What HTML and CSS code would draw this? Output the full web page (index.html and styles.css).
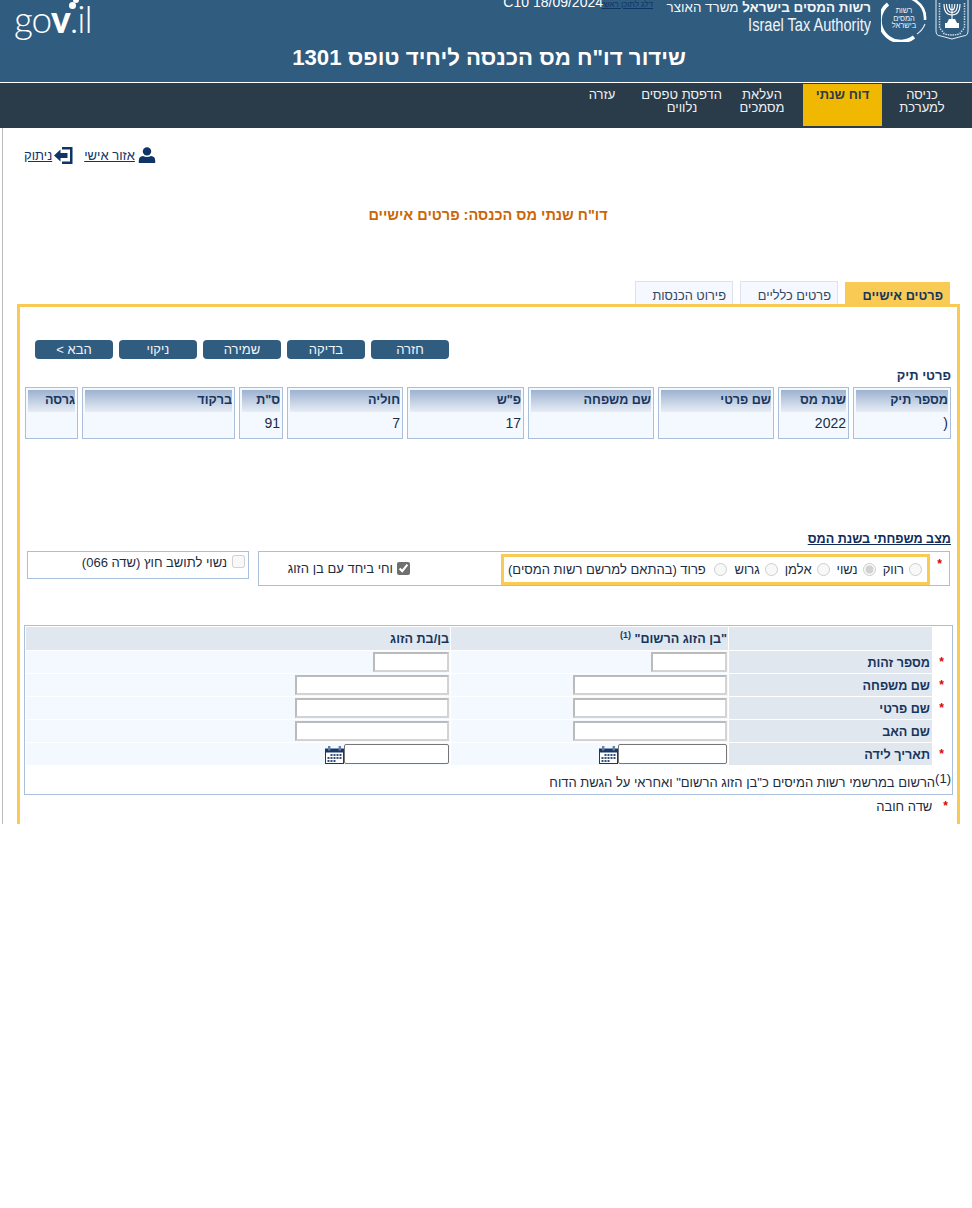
FILE: index.html
```html
<!DOCTYPE html>
<html lang="he" dir="rtl">
<head>
<meta charset="utf-8">
<title>שידור דו"ח מס הכנסה</title>
<link rel="stylesheet" href="styles.css">
</head>
<body>
<header class="site-header">
  <div class="brand-row">
    <svg class="emblem" viewBox="0 0 34 42" aria-hidden="true">
      <path d="M1 1 H33 V33 Q33 38 28 38 L17 41 L6 38 Q1 38 1 33 Z" fill="none" stroke="#e6edf3" stroke-width="1"/>
      <g fill="none" stroke="#fff" stroke-width="1.1">
        <path d="M17 6 V22"/>
        <path d="M9 6 Q9 17 17 17 Q25 17 25 6"/>
        <path d="M11.5 6 Q11.5 14.5 17 14.5 Q22.5 14.5 22.5 6"/>
        <path d="M14.2 6 Q14.2 12 17 12 Q19.8 12 19.8 6"/>
      </g>
      <path d="M14 21 H20 L22 25 H24 V30 H10 V25 H12 Z" fill="#fff"/>
      <g fill="none" stroke="#cfdbe5" stroke-width="1.6" stroke-dasharray="1.4 1.2">
        <path d="M4.5 5 V30 L9 35"/>
        <path d="M29.5 5 V30 L25 35"/>
      </g>
      <path d="M8 35.5 Q17 38.5 26 35.5" fill="none" stroke="#dbe5ed" stroke-width="1.3" stroke-dasharray="1.6 .8"/>
    </svg>
    <svg class="roundel" viewBox="0 0 46 46" aria-hidden="true">
      <path d="M7 8 A20.5 20.5 0 0 0 33 41" fill="none" stroke="#fff" stroke-width="3.6"/>
      <path d="M15 3 A21 21 0 0 1 44 24" fill="none" stroke="#fff" stroke-width="2.6"/>
      <path d="M36 38 A21 21 0 0 0 44 28" fill="none" stroke="#dfe7ee" stroke-width="1.2"/>
      <g class="roundel-text" text-anchor="middle">
        <text x="23" y="17">רשות</text>
        <text x="23" y="24.5">המסים</text>
        <text x="23" y="32">בישראל</text>
      </g>
    </svg>
    <div class="authority">
      <div class="authority-he"><strong>רשות המסים בישראל</strong> משרד האוצר</div>
      <div class="authority-en" dir="ltr">Israel Tax Authority</div>
    </div>
    <a class="skip-link" href="#main">דלג לתוכן ראשי</a>
    <div class="stamp" dir="ltr">C10 18/09/2024</div>
    <div class="gov-logo" dir="ltr">
      <span>go</span><b>v</b><span>.il</span>
      <i class="gov-dot gov-dot-a"></i><i class="gov-dot gov-dot-b"></i>
    </div>
  </div>
  <h1 class="page-title">שידור דו"ח מס הכנסה ליחיד טופס 1301</h1>
</header>

<nav class="main-nav">
  <a class="nav-item" href="#">כניסה<br>למערכת</a>
  <a class="nav-item is-active" href="#">דוח שנתי</a>
  <a class="nav-item" href="#">העלאת<br>מסמכים</a>
  <a class="nav-item" href="#">הדפסת טפסים<br>נלווים</a>
  <a class="nav-item" href="#">עזרה</a>
</nav>

<main class="page-frame" id="main">
  <div class="user-links">
    <svg class="icon-user" viewBox="0 0 18 16" aria-hidden="true">
      <circle cx="9" cy="4.4" r="4.2" fill="#0f3566"/>
      <path d="M0.8 16 V13.5 Q0.8 9.4 5 9 Q9 11.2 13 9 Q17.2 9.4 17.2 13.5 V16 Z" fill="#0f3566"/>
    </svg>
    <a href="#">אזור אישי</a>
    <svg class="icon-exit" viewBox="0 0 20 19" aria-hidden="true">
      <path d="M8 1 H18.5 V18 H8 V15.6 H16 V3.4 H8 Z" fill="#0f3566"/>
      <path d="M0 9.5 L6.5 3.5 V7 H13.5 V12 H6.5 V15.5 Z" fill="#0f3566"/>
    </svg>
    <a href="#">ניתוק</a>
  </div>

  <h2 class="form-title">דו"ח שנתי מס הכנסה: פרטים אישיים</h2>

  <div class="tabs">
    <a class="tab is-active" href="#">פרטים אישיים</a>
    <a class="tab" href="#">פרטים כלליים</a>
    <a class="tab" href="#">פירוט הכנסות</a>
  </div>

  <section class="panel">
    <div class="actions">
      <button class="action-btn" type="button">חזרה</button>
      <button class="action-btn" type="button">בדיקה</button>
      <button class="action-btn" type="button">שמירה</button>
      <button class="action-btn" type="button">ניקוי</button>
      <button class="action-btn" type="button">הבא &gt;</button>
    </div>

    <h3 class="section-label">פרטי תיק</h3>
    <div class="file-grid">
      <div class="file-card"><div class="file-head">מספר תיק</div><div class="file-value">(</div></div>
      <div class="file-card"><div class="file-head">שנת מס</div><div class="file-value">2022</div></div>
      <div class="file-card"><div class="file-head">שם פרטי</div><div class="file-value"></div></div>
      <div class="file-card"><div class="file-head">שם משפחה</div><div class="file-value"></div></div>
      <div class="file-card"><div class="file-head">פ"ש</div><div class="file-value">17</div></div>
      <div class="file-card"><div class="file-head">חוליה</div><div class="file-value">7</div></div>
      <div class="file-card"><div class="file-head">ס"ת</div><div class="file-value">91</div></div>
      <div class="file-card"><div class="file-head">ברקוד</div><div class="file-value"></div></div>
      <div class="file-card"><div class="file-head">גרסה</div><div class="file-value"></div></div>
    </div>

    <h3 class="status-title">מצב משפחתי בשנת המס</h3>
    <div class="status-row">
      <div class="status-box">
        <span class="req req-status">*</span>
        <div class="radio-group">
          <label class="radio"><input type="radio" name="status" disabled>רווק</label>
          <label class="radio"><input type="radio" name="status" disabled checked>נשוי</label>
          <label class="radio"><input type="radio" name="status" disabled>אלמן</label>
          <label class="radio"><input type="radio" name="status" disabled>גרוש</label>
          <label class="radio"><input type="radio" name="status" disabled>&nbsp;פרוד (בהתאם למרשם רשות המסים)</label>
        </div>
        <label class="together"><input type="checkbox" checked>וחי ביחד עם בן הזוג</label>
      </div>
      <label class="foreign-box"><input type="checkbox" disabled>נשוי לתושב חוץ (שדה 066)</label>
    </div>

    <div class="spouse-box">
      <table class="spouse-table">
        <colgroup>
          <col class="col-star"><col class="col-label"><col class="col-reg"><col class="col-spouse">
        </colgroup>
        <tr class="spouse-head">
          <td class="cell-plain"></td>
          <th class="cell-label"></th>
          <th>"בן הזוג הרשום" <sup class="head-sup">(1)</sup></th>
          <th>בן/בת הזוג</th>
        </tr>
        <tr>
          <td class="cell-plain"><span class="req">*</span></td>
          <th class="cell-label">מספר זהות</th>
          <td><input class="field field-id" type="text"></td>
          <td><input class="field field-id" type="text"></td>
        </tr>
        <tr>
          <td class="cell-plain"><span class="req">*</span></td>
          <th class="cell-label">שם משפחה</th>
          <td><input class="field field-name" type="text"></td>
          <td><input class="field field-name" type="text"></td>
        </tr>
        <tr>
          <td class="cell-plain"><span class="req">*</span></td>
          <th class="cell-label">שם פרטי</th>
          <td><input class="field field-name" type="text"></td>
          <td><input class="field field-name" type="text"></td>
        </tr>
        <tr>
          <td class="cell-plain"></td>
          <th class="cell-label">שם האב</th>
          <td><input class="field field-name" type="text"></td>
          <td><input class="field field-name" type="text"></td>
        </tr>
        <tr>
          <td class="cell-plain"><span class="req">*</span></td>
          <th class="cell-label">תאריך לידה</th>
          <td>
            <div class="date-wrap">
              <input class="field-date" type="text">
              <svg class="icon-cal" viewBox="0 0 19 18" aria-hidden="true"><use href="#cal"></use></svg>
            </div>
          </td>
          <td>
            <div class="date-wrap">
              <input class="field-date field-date-short" type="text">
              <svg class="icon-cal" viewBox="0 0 19 18" aria-hidden="true"><use href="#cal"></use></svg>
            </div>
          </td>
        </tr>
      </table>
      <p class="footnote"><sup class="note-sup">(1)</sup>הרשום במרשמי רשות המיסים כ"בן הזוג הרשום" ואחראי על הגשת הדוח</p>
    </div>

    <p class="legend"><span class="req">*</span><span>שדה חובה</span></p>
  </section>
</main>

<svg class="defs" aria-hidden="true">
  <symbol id="cal" viewBox="0 0 19 18">
    <path d="M0 2.5 H19 V18 H0 Z" fill="#17386b"/>
    <rect x="1" y="6.5" width="17" height="10.5" fill="#fff"/>
    <rect x="3" y="0" width="2.4" height="4.5" fill="#6c7f9c"/>
    <rect x="13.6" y="0" width="2.4" height="4.5" fill="#6c7f9c"/>
    <g fill="#33507d">
      <rect x="5.5" y="8" width="2" height="2"/><rect x="8.5" y="8" width="2" height="2"/><rect x="11.5" y="8" width="2" height="2"/><rect x="14.5" y="8" width="2" height="2"/>
      <rect x="2.5" y="11" width="2" height="2"/><rect x="5.5" y="11" width="2" height="2"/><rect x="8.5" y="11" width="2" height="2"/><rect x="11.5" y="11" width="2" height="2"/><rect x="14.5" y="11" width="2" height="2"/>
      <rect x="2.5" y="14" width="2" height="2"/><rect x="5.5" y="14" width="2" height="2"/><rect x="8.5" y="14" width="2" height="2"/>
    </g>
  </symbol>
</svg>
</body>
</html>
```

FILE: styles.css
```css
* { box-sizing: border-box; }

html, body {
  margin: 0;
  padding: 0;
  background: #fff;
}

body {
  font-family: "Liberation Sans", Arial, sans-serif;
  font-size: 13px;
  color: #1b2c44;
}

a { color: #0f3566; }

/* Header */
.site-header {
  height: 82px;
  background: #305c80;
  color: #fff;
  overflow: hidden;
}

.brand-row {
  display: flex;
  align-items: flex-start;
  height: 43px;
  padding-right: 3px;
}

.emblem {
  width: 34px;
  height: 42px;
  margin-top: -2px;
  flex: none;
}

.roundel {
  width: 46px;
  height: 46px;
  margin-top: -4px;
  margin-right: 8px;
  flex: none;
}

.roundel-text text {
  font-size: 7.5px;
  fill: #eef2f6;
  font-family: "Liberation Sans", Arial, sans-serif;
}

.authority {
  margin-right: 10px;
  width: 204px;
  flex: none;
  color: #f2f5f8;
}

.authority-he {
  font-size: 13.4px;
  line-height: 16px;
  white-space: nowrap;
}

.authority-en {
  font-size: 18px;
  line-height: 19px;
  text-align: right;
  white-space: nowrap;
  transform: scaleX(0.81);
  transform-origin: right center;
}

.skip-link {
  font-size: 8px;
  line-height: 9px;
  margin-right: 14px;
  width: 50px;
  white-space: nowrap;
  flex: none;
}

.stamp {
  font-size: 14px;
  line-height: 16px;
  margin-top: -6px;
  white-space: nowrap;
  flex: none;
}

.gov-logo {
  position: relative;
  margin-right: auto;
  margin-left: 14px;
  margin-top: -2px;
  font-family: Lato, "Open Sans", sans-serif;
  font-size: 37px;
  line-height: 42px;
  font-weight: 300;
  letter-spacing: -1.1px;
  white-space: nowrap;
}

.gov-logo b { font-weight: 900; }

.gov-dot {
  position: absolute;
  background: #fff;
  border-radius: 50%;
}

.gov-dot-a {
  width: 7px;
  height: 7px;
  left: 55px;
  top: 4px;
}

.gov-dot-b {
  width: 6px;
  height: 6px;
  left: 59px;
  top: -1px;
}

.page-title {
  margin: 0;
  padding-left: 6px;
  text-align: center;
  font-size: 22.2px;
  line-height: 30px;
  font-weight: bold;
  color: #fff;
}

/* Navigation */
.main-nav {
  display: flex;
  height: 46px;
  border-top: 1px solid #fff;
  background: #2a3b4a;
  padding-right: 10px;
}

.nav-item {
  width: 80px;
  height: 42px;
  margin-top: 1px;
  padding-top: 4px;
  text-align: center;
  color: #eef1f4;
  font-size: 13px;
  line-height: 13px;
  text-decoration: none;
  white-space: nowrap;
}

.nav-item.is-active {
  background: #f0b800;
  border-left: 1px solid #2a3b4a;
  color: #2a3b4a;
  font-weight: bold;
}

/* Frame */
.page-frame {
  height: 696px;
  margin-left: 2px;
  border-left: 1px solid #bbb;
  overflow: hidden;
}

.user-links {
  display: flex;
  justify-content: flex-end;
  align-items: center;
  height: 20px;
  margin-top: 17px;
  padding-left: 21px;
  font-size: 13px;
}

.icon-user {
  width: 18px;
  height: 16px;
  margin-left: 3px;
}

.icon-exit {
  width: 20px;
  height: 19px;
  margin-right: 10px;
  margin-left: 2px;
}

.form-title {
  margin: 40px 0 0;
  padding-left: 1px;
  text-align: center;
  font-size: 14.5px;
  line-height: 20px;
  font-weight: bold;
  color: #cc6600;
}

.tabs {
  display: flex;
  align-items: flex-end;
  gap: 7px;
  height: 23px;
  margin-top: 56px;
  padding-right: 22px;
}

.tab {
  width: 98px;
  height: 23px;
  padding: 6px 6px 0 0;
  font-size: 12.8px;
  line-height: 16px;
  color: #33475f;
  text-decoration: none;
  background: #f5f8ff;
  border: 1px solid #dde3ee;
  border-bottom: 0;
  white-space: nowrap;
}

.tab.is-active {
  width: 105px;
  height: 22px;
  padding: 6px 7px 0 0;
  background: #f9cb55;
  border: 0;
  color: #17365e;
  font-weight: bold;
}

/* Panel */
.panel {
  margin-right: 12px;
  margin-left: 14px;
  border: 3px solid #f9cb55;
  border-bottom: 0;
  height: 540px;
}

.actions {
  display: flex;
  justify-content: flex-end;
  gap: 6px;
  margin-top: 33px;
  padding-left: 15px;
}

.action-btn {
  width: 78px;
  height: 19px;
  padding: 0;
  border: 0;
  border-radius: 4px;
  background: #305c80;
  color: #f3f6f9;
  font: 13px/17px "Liberation Sans", Arial, sans-serif;
}

.section-label {
  margin: 8px 6px 0 0;
  font-size: 13px;
  line-height: 17px;
  font-weight: bold;
  color: #17365e;
}

.file-grid {
  display: grid;
  grid-template-columns: 98px 71px 116px 126px 117px 116px 44px 153px 53px;
  gap: 4px;
  margin-top: 3px;
  margin-right: 6px;
}

.file-card {
  height: 52px;
  padding: 2px;
  background: #f4f8ff;
  border: 1px solid #a9bfdc;
}

.file-head {
  height: 22px;
  background: linear-gradient(#9db2cf, #e7edf6);
  font-size: 12.6px;
  line-height: 21px;
  font-weight: bold;
  color: #17365e;
}

.file-value {
  height: 22px;
  padding-top: 3px;
  font-size: 14px;
  line-height: 17px;
  color: #1b2c44;
}

.status-title {
  margin: 92px 6px 0 0;
  font-size: 12.6px;
  line-height: 17px;
  font-weight: bold;
  text-decoration: underline;
  color: #0f2d5c;
}

.status-row {
  display: flex;
  align-items: flex-start;
  gap: 9px;
  margin-top: 3px;
  margin-right: 7px;
}

.status-box {
  display: flex;
  width: 692px;
  height: 35px;
  border: 1px solid #a9bfdc;
}

.req {
  color: #e00000;
  font-size: 12px;
  font-weight: bold;
  line-height: 14px;
}

.req-status {
  width: 19px;
  padding-top: 5px;
  text-align: center;
}

.radio-group {
  display: flex;
  align-items: center;
  width: 429px;
  height: 31px;
  margin-top: 2px;
  padding-right: 5px;
  gap: 7px;
  border: 3px solid #f9cb55;
  white-space: nowrap;
}

.radio {
  display: flex;
  align-items: center;
  gap: 5px;
}

.radio input,
.together input,
.foreign-box input {
  margin: 0;
  width: 13px;
  height: 13px;
  flex: none;
}

.together {
  display: flex;
  align-items: center;
  height: 33px;
  padding-right: 91px;
  gap: 4px;
  white-space: nowrap;
}

.together input { accent-color: #6f6f6f; }

.foreign-box {
  display: flex;
  align-items: flex-start;
  width: 222px;
  height: 28px;
  padding: 3px 3px 0 0;
  gap: 5px;
  line-height: 15px;
  border: 1px solid #a9bfdc;
  white-space: nowrap;
}

/* Spouse table */
.spouse-box {
  margin: 39px 4px 0 4px;
  height: 170px;
  border: 1px solid #a9bfdc;
}

.spouse-table {
  table-layout: fixed;
  width: 927px;
  border-collapse: separate;
  border-spacing: 1px;
}

.col-star { width: 18px; }
.col-label { width: 203px; }
.col-reg { width: 277px; }
.col-spouse { width: 424px; }

.spouse-table td,
.spouse-table th {
  height: 22px;
  padding: 0 1px 0 0;
  background: #f4f8ff;
  text-align: right;
  font-size: 13px;
  line-height: 16px;
  vertical-align: middle;
}

.spouse-table th {
  padding-top: 1px;
  font-size: 12.6px;
  font-weight: bold;
  color: #17365e;
}

.spouse-table .cell-plain {
  background: #fff;
  text-align: center;
}

.spouse-table .cell-label {
  background: #e1e7ef;
  padding: 1px 2px 0 0;
}

.spouse-head th {
  height: 23px;
  background: #e1e7ef;
}

.head-sup {
  font-size: 9px;
  line-height: 0;
  vertical-align: 5px;
}

.field {
  display: block;
  height: 20px;
  padding: 0;
  background: #fff;
  border-style: solid;
  border-width: 2px;
  border-color: #bbb #d3d3d3 #d3d3d3 #bbb;
}

.field-id { width: 76px; }
.field-name { width: 154px; }

.date-wrap {
  display: flex;
  align-items: flex-end;
}

.field-date {
  width: 109px;
  height: 20px;
  padding: 0;
  background: #fff;
  border: 1px solid #767676;
  border-radius: 2px;
}

.field-date-short { width: 105px; }

.icon-cal {
  width: 19px;
  height: 18px;
  flex: none;
}

.footnote {
  margin: 9px 0 0;
  padding-right: 1px;
  font-size: 13px;
  line-height: 16px;
}

.note-sup {
  font-size: 13px;
  line-height: 0;
  vertical-align: 4px;
}

.legend {
  display: flex;
  gap: 11px;
  margin: 4px 0 0;
  padding-right: 9px;
  font-size: 13px;
  line-height: 16px;
}

.defs {
  position: absolute;
  width: 0;
  height: 0;
}
```
